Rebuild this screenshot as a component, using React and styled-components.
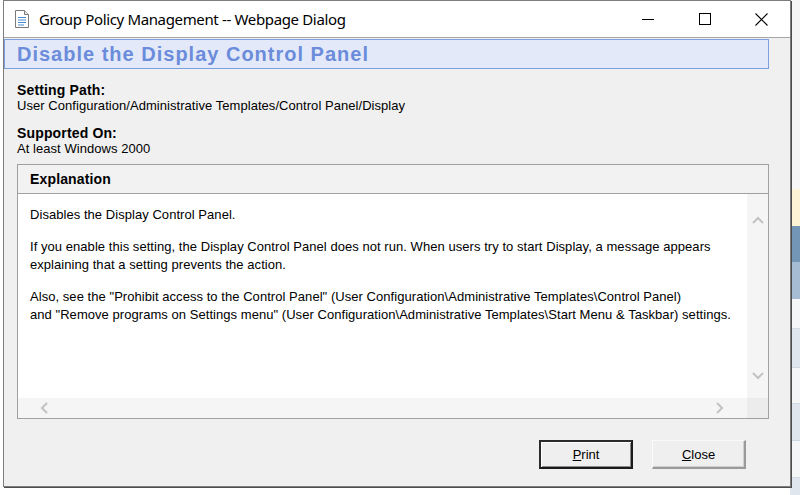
import React from "react";
import styled, { createGlobalStyle } from "styled-components";

const Global = createGlobalStyle`
  html, body { margin: 0; padding: 0; }
  body { width: 800px; height: 495px; overflow: hidden; font-family: "Liberation Sans", Arial, sans-serif; }
`;

const Desktop = styled.div`
  position: relative;
  width: 800px;
  height: 495px;
  overflow: hidden;
  background: #ffffff;
`;

const BackApp = styled.div`
  display: flex;
  flex-direction: column;
  height: 100%;
`;

const BackTop = styled.div`
  flex: 1;
  display: flex;
  justify-content: flex-end;
`;

const RightList = styled.div`
  width: 10px;
  display: flex;
  flex-direction: column;
  background: #f6f6f6;
  padding-top: 189px;
`;

const ListRow = styled.div`
  height: ${(p) => p.$h}px;
  background: ${(p) => p.$bg};
  border-bottom: 1px solid ${(p) => p.$line || "transparent"};
  flex-shrink: 0;
`;

const BackBottom = styled.div`
  height: 16px;
  display: flex;
`;

const TreeLines = styled.div`
  width: 145px;
  display: flex;
  gap: 6px;
  padding-left: 60px;
  box-sizing: border-box;
`;

const TreeLine = styled.div`
  width: 1px;
  background: #a8a8a8;
  margin-right: ${(p) => p.$gap || 0}px;
`;

const BottomBar = styled.div`
  flex: 1;
  background: #dfe6ee;
  font: bold 15px "Liberation Sans", Arial, sans-serif;
  color: #1a1a1a;
  padding-left: 15px;
  line-height: 16px;
  padding-top: 2px;
  overflow: hidden;
`;

const Dialog = styled.div`
  position: absolute;
  left: 3px;
  top: 0;
  width: 786px;
  height: 485px;
  border: 1px solid #7d7d7d;
  box-shadow: 1px 1px 0 #4d4d4d;
  background: #f0f0f0;
  display: flex;
  flex-direction: column;
`;

const TitleBar = styled.div`
  height: 36px;
  background: #ffffff;
  border-bottom: 1px solid #a6a6a6;
  display: flex;
  align-items: center;
  flex-shrink: 0;
`;

const TitleIcon = styled.svg`
  margin-left: 11px;
  margin-right: 10px;
  flex-shrink: 0;
`;

const TitleText = styled.div`
  font: 15px "Noto Sans", "Segoe UI", sans-serif;
  color: #000;
  flex: 1;
  letter-spacing: -0.35px;
`;

const Controls = styled.div`
  display: flex;
  height: 100%;
`;

const CtrlBtn = styled.div`
  width: 57px;
  height: 100%;
  display: flex;
  align-items: center;
  justify-content: center;
`;

const Body = styled.div`
  flex: 1;
  display: flex;
  flex-direction: column;
  padding: 1px 21px 0 0;
`;

const Heading = styled.h1`
  margin: 0;
  height: 28px;
  background: #e3e9f8;
  border: 1px solid #7c9fe0;
  font: bold 20px "Liberation Sans", Arial, sans-serif;
  color: #6b8cdb;
  padding-left: 12px;
  line-height: 29px;
  letter-spacing: 1px;
`;

const Info = styled.div`
  padding: 13px 0 0 13px;
  display: flex;
  flex-direction: column;
`;

const Label = styled.div`
  font: bold 14px "Liberation Sans", Arial, sans-serif;
  letter-spacing: 0.15px;
  color: #000;
  line-height: 16px;
  margin-top: ${(p) => p.$mt || 0}px;
`;

const Value = styled.div`
  font: 13px "Liberation Sans", Arial, sans-serif;
  letter-spacing: 0.05px;
  color: #000;
  line-height: 15px;
`;

const ExplBox = styled.div`
  margin: 8px 0 0 13px;
  border: 1px solid #a0a0a0;
  display: flex;
  flex-direction: column;
  height: 255px;
  box-sizing: border-box;
`;

const ExplHeader = styled.div`
  height: 28px;
  border-bottom: 1px solid #a0a0a0;
  background: #f2f2f2;
  font: bold 14px "Liberation Sans", Arial, sans-serif;
  letter-spacing: 0.15px;
  color: #000;
  padding-left: 12px;
  line-height: 28px;
  flex-shrink: 0;
`;

const ScrollArea = styled.div`
  flex: 1;
  display: grid;
  grid-template-columns: 1fr 21px;
  grid-template-rows: 1fr 20px;
  background: #fff;
`;

const Content = styled.div`
  padding: 12px 0 0 12px;
  font: 13px "Liberation Sans", Arial, sans-serif;
  letter-spacing: 0.05px;
  color: #000;
  line-height: 18px;
`;

const Para = styled.p`
  margin: 0 0 14px 0;
`;

const VScroll = styled.div`
  background: #f5f5f5;
  display: flex;
  flex-direction: column;
  justify-content: space-between;
  align-items: center;
  padding: 22px 0 18px;
`;

const HScroll = styled.div`
  background: #f5f5f5;
  display: flex;
  justify-content: space-between;
  align-items: center;
  padding: 0 23px 0 22px;
`;

const Corner = styled.div`
  background: #ececec;
`;

const Footer = styled.div`
  display: flex;
  justify-content: flex-end;
  gap: 19px;
  padding: 21px 23px 0 0;
`;

const Button = styled.button`
  width: 94px;
  height: 29px;
  box-sizing: border-box;
  background: #efefef;
  font: 13px "Liberation Sans", Arial, sans-serif;
  color: #000;
  padding: 0;
  border-style: solid;
  border-width: ${(p) => (p.$default ? "2px" : "1px 2px 2px 1px")};
  border-color: ${(p) =>
    p.$default ? "#2b2b2b #1a1a1a #1a1a1a #2b2b2b" : "#fafafa #9a9a9a #9a9a9a #fafafa"};
  box-shadow: ${(p) => (p.$default ? "inset 1px 1px 0 #fff, inset -1px -1px 0 #8a8a8a" : "inset -1px -1px 0 #cfcfcf")};
  u { text-decoration: underline; }
`;

const Chevron = ({ dir }) => {
  const paths = {
    up: "M1 7 L6 2 L11 7",
    down: "M1 2 L6 7 L11 2",
    left: "M7 1 L2 6 L7 11",
    right: "M2 1 L7 6 L2 11",
  };
  const horiz = dir === "left" || dir === "right";
  return (
    <svg width={horiz ? 9 : 12} height={horiz ? 12 : 9} viewBox={horiz ? "0 0 9 12" : "0 0 12 9"}>
      <path d={paths[dir]} fill="none" stroke="#c2c2c2" strokeWidth="2" />
    </svg>
  );
};

export default function App() {
  return (
    <>
      <Global />
      <Desktop>
        <BackApp>
          <BackTop>
            <RightList>
              <ListRow $h={36} $bg="#fdf4d6" />
              <ListRow $h={35} $bg="#7396b6" />
              <ListRow $h={36} $bg="#a6bcd2" />
              <ListRow $h={29} $bg="#f5f6f7" $line="#d3dbe3" />
              <ListRow $h={38} $bg="#dfe6ee" $line="#cfd8e1" />
              <ListRow $h={35} $bg="#f5f6f7" $line="#d3dbe3" />
              <ListRow $h={36} $bg="#dfe6ee" $line="#cfd8e1" />
              <ListRow $h={36} $bg="#f5f6f7" $line="#d3dbe3" />
              <ListRow $h={30} $bg="#dfe6ee" />
            </RightList>
          </BackTop>
          <BackBottom>
            <TreeLines>
              <TreeLine />
              <TreeLine $gap={6} />
              <TreeLine />
            </TreeLines>
            <BottomBar>Control Panel/Programs</BottomBar>
          </BackBottom>
        </BackApp>

        <Dialog>
          <TitleBar>
            <TitleIcon width="14" height="18" viewBox="0 0 14 18">
              <path d="M0.5 0.5 H9.5 L13.5 4.5 V17.5 H0.5 Z" fill="#fff" stroke="#7a7a7a" />
              <path d="M9.5 0.5 V4.5 H13.5" fill="#e8e8e8" stroke="#7a7a7a" />
              <path d="M3 7.5 H11 M3 10 H11 M3 12.5 H11 M3 15 H9" stroke="#4a8ad0" strokeWidth="1" />
            </TitleIcon>
            <TitleText>Group Policy Management -- Webpage Dialog</TitleText>
            <Controls>
              <CtrlBtn>
                <svg width="12" height="12" viewBox="0 0 12 12">
                  <path d="M0 6.5 H12" stroke="#000" strokeWidth="1" />
                </svg>
              </CtrlBtn>
              <CtrlBtn>
                <svg width="12" height="12" viewBox="0 0 12 12">
                  <rect x="0.5" y="0.5" width="11" height="11" fill="none" stroke="#000" strokeWidth="1" />
                </svg>
              </CtrlBtn>
              <CtrlBtn>
                <svg width="13" height="13" viewBox="0 0 13 13">
                  <path d="M0.5 0.5 L12.5 12.5 M12.5 0.5 L0.5 12.5" stroke="#000" strokeWidth="1.1" />
                </svg>
              </CtrlBtn>
            </Controls>
          </TitleBar>

          <Body>
            <Heading>Disable the Display Control Panel</Heading>
            <Info>
              <Label>Setting Path:</Label>
              <Value>User Configuration/Administrative Templates/Control Panel/Display</Value>
              <Label $mt={12}>Supported On:</Label>
              <Value>At least Windows 2000</Value>
            </Info>
            <ExplBox>
              <ExplHeader>Explanation</ExplHeader>
              <ScrollArea>
                <Content>
                  <Para>Disables the Display Control Panel.</Para>
                  <Para>
                    If you enable this setting, the Display Control Panel does not run. When users try to start Display, a message appears
                    <br />
                    explaining that a setting prevents the action.
                  </Para>
                  <Para>
                    Also, see the "Prohibit access to the Control Panel" (User Configuration\Administrative Templates\Control Panel)
                    <br />
                    and "Remove programs on Settings menu" (User Configuration\Administrative Templates\Start Menu &amp; Taskbar) settings.
                  </Para>
                </Content>
                <VScroll>
                  <Chevron dir="up" />
                  <Chevron dir="down" />
                </VScroll>
                <HScroll>
                  <Chevron dir="left" />
                  <Chevron dir="right" />
                </HScroll>
                <Corner />
              </ScrollArea>
            </ExplBox>
            <Footer>
              <Button $default>
                <u>P</u>rint
              </Button>
              <Button>
                <u>C</u>lose
              </Button>
            </Footer>
          </Body>
        </Dialog>
      </Desktop>
    </>
  );
}
